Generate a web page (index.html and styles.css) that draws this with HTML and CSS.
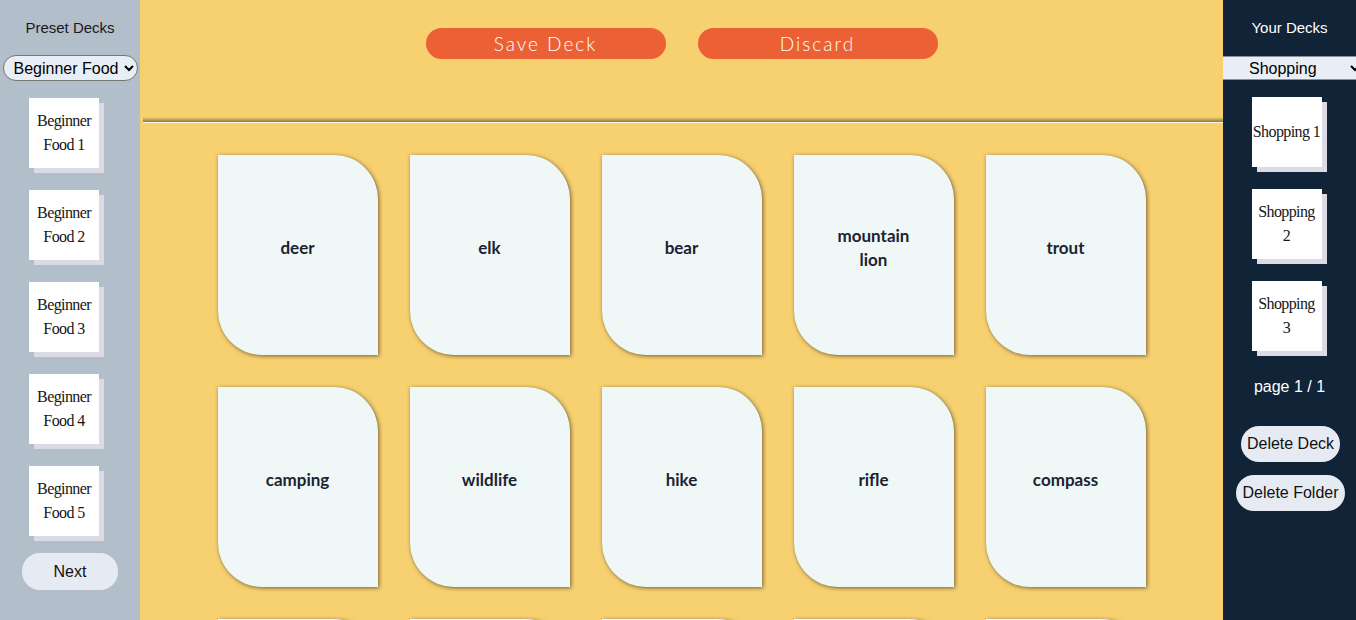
FILE: index.html
```html
<!DOCTYPE html>
<html>
<head>
<meta charset="utf-8">
<link rel="stylesheet" href="styles.css">
</head>
<body>
<div class="app">
  <aside class="side side-left">
    <div class="side-title">Preset Decks</div>
    <select class="preset-select">
      <option>Beginner Food</option>
    </select>
    <div class="deck-list">
      <div class="mini-deck">Beginner<br>Food 1</div>
      <div class="mini-deck">Beginner<br>Food 2</div>
      <div class="mini-deck">Beginner<br>Food 3</div>
      <div class="mini-deck">Beginner<br>Food 4</div>
      <div class="mini-deck">Beginner<br>Food 5</div>
    </div>
    <button class="pill next-btn">Next</button>
  </aside>

  <main class="main">
    <header class="toolbar">
      <button class="action-btn">Save Deck</button>
      <button class="action-btn">Discard</button>
    </header>
    <section class="card-grid">
      <div class="card">deer</div>
      <div class="card">elk</div>
      <div class="card">bear</div>
      <div class="card">mountain<br>lion</div>
      <div class="card">trout</div>
      <div class="card">camping</div>
      <div class="card">wildlife</div>
      <div class="card">hike</div>
      <div class="card">rifle</div>
      <div class="card">compass</div>
      <div class="card"></div>
      <div class="card"></div>
      <div class="card"></div>
      <div class="card"></div>
      <div class="card"></div>
    </section>
  </main>

  <aside class="side side-right">
    <div class="side-title light">Your Decks</div>
    <select class="folder-select">
      <option>Shopping</option>
    </select>
    <div class="deck-list">
      <div class="mini-deck">Shopping 1</div>
      <div class="mini-deck">Shopping<br>2</div>
      <div class="mini-deck">Shopping<br>3</div>
    </div>
    <div class="page-info">page 1 / 1</div>
    <button class="pill del-btn">Delete Deck</button>
    <button class="pill del-btn">Delete Folder</button>
  </aside>
</div>
</body>
</html>
```

FILE: styles.css
```css
* { box-sizing: border-box; }
html, body {
  margin: 0;
  padding: 0;
  height: 620px;
  overflow: hidden;
}
body {
  font-family: "Liberation Sans", Arial, sans-serif;
}
.app {
  display: flex;
  height: 620px;
  overflow: hidden;
}

/* sidebars */
.side {
  flex: none;
  display: flex;
  flex-direction: column;
  align-items: center;
  overflow: hidden;
}
.side-left {
  width: 140px;
  background: #b2bec9;
}
.side-right {
  width: 133px;
  background: #112336;
}
.side-title {
  margin-top: 19px;
  height: 18px;
  line-height: 18px;
  font-size: 15px;
  color: #1a1a1a;
}
.side-title.light { color: #ffffff; }

.preset-select {
  margin-top: 18px;
  width: 135px;
  height: 26px;
  font-family: "Liberation Sans", Arial, sans-serif;
  font-size: 16px;
  color: #000;
  background: #e8eef6;
  border: 1px solid #767676;
  border-radius: 13px;
  padding: 0 2px 0 6px;
}
.folder-select {
  margin-top: 19px;
  align-self: flex-start;
  width: 140px;
  height: 24px;
  font-family: "Liberation Sans", Arial, sans-serif;
  font-size: 16px;
  color: #000;
  background: #e8eef6;
  border: none;
  border-top: 1px solid #8a8f96;
  border-bottom: 1px solid #8a8f96;
  border-radius: 0;
  padding: 0 0 0 22px;
}

.deck-list {
  margin-top: 17px;
  display: flex;
  flex-direction: column;
  gap: 22px;
}
.side-left .deck-list { margin-right: 12px; }
.side-right .deck-list { margin-right: 6px; }
.mini-deck {
  width: 70px;
  height: 70px;
  background: #ffffff;
  box-shadow: 5px 5px 0 #dcdae5;
  display: flex;
  align-items: center;
  justify-content: center;
  text-align: center;
  white-space: nowrap;
  font-family: "Liberation Serif", "Times New Roman", serif;
  font-size: 16px;
  letter-spacing: -0.6px;
  line-height: 24px;
  color: #161616;
  padding: 0;
}

.pill {
  font-family: "Liberation Sans", Arial, sans-serif;
  font-size: 16px;
  color: #111;
  background: #e6ebf3;
  border: none;
  border-radius: 18px;
}
.next-btn {
  margin-top: 17px;
  width: 96px;
  height: 37px;
}
.page-info {
  margin-top: 26px;
  height: 20px;
  line-height: 20px;
  font-size: 16px;
  color: #ffffff;
}
.del-btn {
  height: 36px;
  padding: 0 6px;
  margin-left: 2px;
}
.page-info + .del-btn { margin-top: 29px; }
.del-btn + .del-btn { margin-top: 13px; }

/* main area */
.main {
  flex: 1;
  background: #f7d070;
  overflow: hidden;
}
.toolbar {
  height: 123px;
  margin-left: 3px;
  display: flex;
  justify-content: center;
  gap: 32px;
  padding-top: 28px;
  padding-right: 3px;
  border-bottom: 1px solid #fff8e6;
  background: linear-gradient(to bottom, rgba(0,0,0,0) calc(100% - 5px), rgba(90, 70, 25, 0.65));
}
.action-btn {
  width: 240px;
  height: 31px;
  border: none;
  border-radius: 16px;
  background: #ec6036;
  color: #ffffff;
  font-family: Lato, "Open Sans", sans-serif;
  font-weight: 300;
  font-size: 19px;
  letter-spacing: 2px;
}

.card-grid {
  margin-top: 32px;
  display: grid;
  grid-template-columns: repeat(5, 160px);
  grid-auto-rows: 200px;
  gap: 32px;
  justify-content: center;
}
.card {
  background: #eff8f7;
  border-radius: 0 44px 0 44px;
  box-shadow: 1px 1px 4px rgba(0, 0, 0, 0.55);
  display: flex;
  align-items: center;
  justify-content: center;
  text-align: center;
  padding-bottom: 14px;
  font-family: Lato, "Open Sans", sans-serif;
  font-weight: 700;
  font-size: 17px;
  line-height: 24px;
  color: #1d2230;
}
```
